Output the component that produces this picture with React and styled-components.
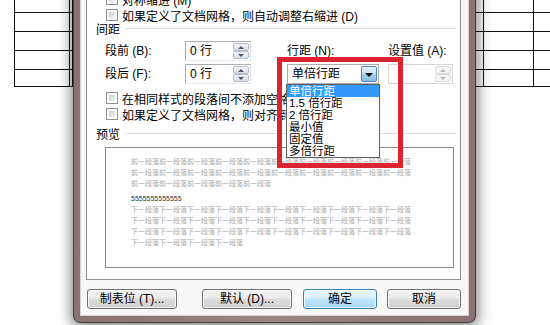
import React from "react";
import styled, { createGlobalStyle } from "styled-components";

const GlobalStyle = createGlobalStyle`
  html, body {
    margin: 0;
    padding: 0;
    background: #fff;
  }
  body {
    font-family: "Liberation Sans", "Noto Sans CJK SC", sans-serif;
    font-size: 12px;
    color: #000;
  }
  * {
    box-sizing: border-box;
  }
`;

const Page = styled.div`
  width: 550px;
  height: 325px;
  overflow: hidden;
  display: flex;
  align-items: flex-end;
  padding-bottom: 2px;
  background: #fff;
`;

// document table peeking out behind the dialog
const DocSide = styled.div`
  align-self: flex-start;
  flex: ${p => (p.$grow ? "1" : "none")};
  width: ${p => (p.$grow ? "auto" : "73px")};
  padding-left: ${p => p.$indent || 0}px;
  overflow: hidden;
`;

const DocTable = styled.div`
  border-left: ${p => (p.$open ? "none" : "1px solid #111")};
  width: ${p => (p.$width ? `${p.$width}px` : "auto")};
`;

const DocRow = styled.div`
  display: flex;
  height: ${p => p.$h}px;
  border-bottom: 1px solid #111;
`;

const DocCell = styled.div`
  flex: ${p => (p.$w ? `0 0 ${p.$w}px` : "1")};
  border-right: ${p => (p.$last ? "none" : "1px solid #111")};
`;

const Window = styled.div`
  position: relative;
  z-index: 1;
  flex: none;
  width: 403px;
  background: linear-gradient(90deg, #8a7273, #9a8485 50%, #8a7273);
  border: 1px solid #4a3b3c;
  border-top: none;
  border-radius: 0 0 7px 7px;
  padding: 0 6px 6px;
  box-shadow: 0 2px 14px 2px rgba(0, 0, 0, 0.5);
`;

const Client = styled.div`
  background: #f7f7f7;
  border: 1px solid #dcd2d2;
  border-top: none;
  padding: 0 7px 6px 5px;
`;

const Panel = styled.div`
  position: relative;
  background: #fff;
  border: 1px solid #8e8f8f;
  border-top: none;
  padding: 20px 4px 11px 9px;
`;

const GroupHeader = styled.div`
  display: flex;
  align-items: center;
  height: 14px;
  line-height: 14px;
  margin-top: ${p => p.$mt || 0}px;
  white-space: nowrap;

  &::after {
    content: "";
    flex: 1;
    height: 1px;
    margin: -3px 0 0 5px;
    background: #d5dfe5;
  }
`;

const CheckRow = styled.div`
  display: flex;
  align-items: center;
  gap: 4px;
  height: 16px;
  margin-left: 10px;
  margin-top: ${p => p.$mt || 0}px;
  white-space: nowrap;
`;

const CheckBox = styled.span`
  flex: none;
  width: 12px;
  height: 12px;
  border: 1px solid #8e8f8f;
  padding: 2px;
  background: linear-gradient(135deg, #c6cace, #f1f2f3) content-box, #fff;
`;

const SpacingGrid = styled.div`
  display: grid;
  grid-template-columns: 80px 102px 101px 65px;
  grid-template-rows: 20px 20px;
  row-gap: 3px;
  margin: 4px 0 0 9px;
  align-items: center;
`;

const FieldLabel = styled.span`
  line-height: 20px;
  white-space: nowrap;
`;

const SpinBox = styled.div`
  display: flex;
  width: ${p => p.$w}px;
  height: 20px;
  padding: 1px;
  border: 1px solid ${p => (p.$disabled ? "#d5d5d5" : "#abadb3")};
  border-bottom-color: ${p => (p.$disabled ? "#d5d5d5" : "#e3e9ef")};
  border-right-color: ${p => (p.$disabled ? "#d5d5d5" : "#dbdfe6")};
  background: #fff;
`;

const SpinValue = styled.span`
  flex: 1;
  padding-left: 3px;
  line-height: 16px;
`;

const SpinButtons = styled.span`
  display: flex;
  flex-direction: column;
  width: 16px;
`;

const SpinHalf = styled.span`
  flex: 1;
  display: flex;
  align-items: center;
  justify-content: center;
  border: 1px solid ${p => (p.$disabled ? "#d7dadf" : "#b7bdc6")};
  border-radius: 2px;
  background: ${p =>
    p.$disabled ? "#f4f4f4" : "linear-gradient(#f2f4f7, #d9e0e8)"};

  &::before {
    content: "";
    border-left: 3px solid transparent;
    border-right: 3px solid transparent;
    ${p =>
      p.$up
        ? `border-bottom: 3px solid ${p.$disabled ? "#b8b8b8" : "#4a5668"};`
        : `border-top: 3px solid ${p.$disabled ? "#b8b8b8" : "#4a5668"};`}
  }
`;

const Combo = styled.div`
  position: relative;
  display: flex;
  width: 92px;
  height: 20px;
  padding: 1px;
  border: 1px solid #abadb3;
  background: #fff;
`;

const ComboText = styled.span`
  flex: 1;
  padding-left: 3px;
  line-height: 16px;
  white-space: nowrap;
`;

const ComboButton = styled.span`
  width: 16px;
  display: flex;
  align-items: center;
  justify-content: center;
  border: 1px solid #4f86b3;
  border-radius: 2px;
  background: linear-gradient(#e4f2fb, #c6e2f4 50%, #a6d0ec 51%, #8cc0e3);

  &::before {
    content: "";
    border-left: 4px solid transparent;
    border-right: 4px solid transparent;
    border-top: 4px solid #111;
    margin-top: 1px;
  }
`;

const DropList = styled.ul`
  position: absolute;
  z-index: 2;
  left: -2px;
  top: calc(100% + 1px);
  width: 94px;
  margin: 0;
  padding: 0;
  list-style: none;
  background: #fff;
  border: 1px solid #5e5e5e;
`;

const DropItem = styled.li`
  height: 12px;
  line-height: 12px;
  font-size: 11.5px;
  padding-left: 2px;
  white-space: nowrap;
  overflow: hidden;
  color: ${p => (p.$active ? "#fff" : "#000")};
  background: ${p => (p.$active ? "#3399ff" : "transparent")};
`;

const Highlight = styled.div`
  position: absolute;
  z-index: 3;
  left: -11px;
  top: -8px;
  width: 126px;
  height: 111px;
  border: 5px solid #dc2430;
  pointer-events: none;
`;

const PreviewBox = styled.div`
  height: 121px;
  margin: 5px 2px 0 9px;
  padding: 8px 0 0 25px;
  border: 1px solid #8a8a8a;
  background: #fff;
  overflow: hidden;
  font-family: "Noto Sans CJK SC", sans-serif;
  font-size: 7px;
`;

const PreviewPara = styled.p`
  width: 280px;
  margin: ${p => (p.$sample ? "5px 0 0" : "0")};
  line-height: ${p => (p.$sample ? "10px" : "11px")};
  color: ${p => (p.$sample ? "#333" : "#a9a9a9")};
  font-family: ${p => (p.$sample ? '"Liberation Sans", sans-serif' : "inherit")};
  word-break: break-all;
`;

const ButtonRow = styled.div`
  display: flex;
  justify-content: space-between;
  margin-top: 9px;
  padding-left: 1px;
`;

const ButtonGroup = styled.div`
  display: flex;
  gap: ${p => p.$gap}px;
`;

const Button = styled.button`
  width: ${p => p.$w}px;
  height: 20px;
  padding: 0;
  font: inherit;
  line-height: 18px;
  color: #000;
  border: 1px solid ${p => (p.$primary ? "#3c7fb1" : "#707070")};
  border-radius: 3px;
  background: ${p =>
    p.$primary
      ? "linear-gradient(#eaf6fd, #d9f0fc 45%, #bee6fd 50%, #a7d9f5)"
      : "linear-gradient(#f2f2f2, #ebebeb 45%, #dddddd 50%, #cfcfcf)"};
  box-shadow: inset 0 0 0 1px rgba(255, 255, 255, 0.75);
`;

const Spin = ({ value, width, disabled }) => (
  <SpinBox $w={width} $disabled={disabled}>
    <SpinValue>{value}</SpinValue>
    <SpinButtons>
      <SpinHalf $up $disabled={disabled} />
      <SpinHalf $disabled={disabled} />
    </SpinButtons>
  </SpinBox>
);

const rowHeights = [13, 19, 19, 19, 17];

const lineOptions = ["单倍行距", "1.5 倍行距", "2 倍行距", "最小值", "固定值", "多倍行距"];

const App = () => (
  <>
    <GlobalStyle />
    <Page>
      <DocSide $indent={14}>
        <DocTable $width={59}>
          {rowHeights.map((h, i) => (
            <DocRow key={i} $h={h}>
              <DocCell $w={55} />
              <DocCell $w={3} />
            </DocRow>
          ))}
        </DocTable>
      </DocSide>

      <Window>
        <Client>
          <Panel>
            <CheckRow>
              <CheckBox />
              对称缩进 (M)
            </CheckRow>
            <CheckRow>
              <CheckBox />
              如果定义了文档网格，则自动调整右缩进 (D)
            </CheckRow>

            <GroupHeader>间距</GroupHeader>
            <SpacingGrid>
              <FieldLabel>段前 (B):</FieldLabel>
              <Spin value="0 行" width={66} />
              <FieldLabel>行距 (N):</FieldLabel>
              <FieldLabel>设置值 (A):</FieldLabel>

              <FieldLabel>段后 (F):</FieldLabel>
              <Spin value="0 行" width={66} />
              <Combo>
                <ComboText>单倍行距</ComboText>
                <ComboButton />
                <DropList>
                  {lineOptions.map((o, i) => (
                    <DropItem key={o} $active={i === 0}>
                      {o}
                    </DropItem>
                  ))}
                </DropList>
                <Highlight />
              </Combo>
              <Spin value="" width={65} disabled />
            </SpacingGrid>

            <CheckRow $mt={6}>
              <CheckBox />
              在相同样式的段落间不添加空格 (C)
            </CheckRow>
            <CheckRow>
              <CheckBox />
              如果定义了文档网格，则对齐到网格 (W)
            </CheckRow>

            <GroupHeader $mt={6}>预览</GroupHeader>
            <PreviewBox>
              <PreviewPara>{"前一段落".repeat(25)}</PreviewPara>
              <PreviewPara $sample>5555555555555</PreviewPara>
              <PreviewPara>{"下一段落".repeat(34)}</PreviewPara>
            </PreviewBox>
          </Panel>

          <ButtonRow>
            <ButtonGroup $gap={25}>
              <Button $w={90}>制表位 (T)...</Button>
              <Button $w={90}>默认 (D)...</Button>
            </ButtonGroup>
            <ButtonGroup $gap={10}>
              <Button $w={74} $primary>
                确定
              </Button>
              <Button $w={74}>取消</Button>
            </ButtonGroup>
          </ButtonRow>
        </Client>
      </Window>

      <DocSide $grow>
        <DocTable $open>
          {rowHeights.map((h, i) => (
            <DocRow key={i} $h={h}>
              <DocCell $w={8} />
              <DocCell $w={50} />
              <DocCell $last />
            </DocRow>
          ))}
        </DocTable>
      </DocSide>
    </Page>
  </>
);

export default App;
